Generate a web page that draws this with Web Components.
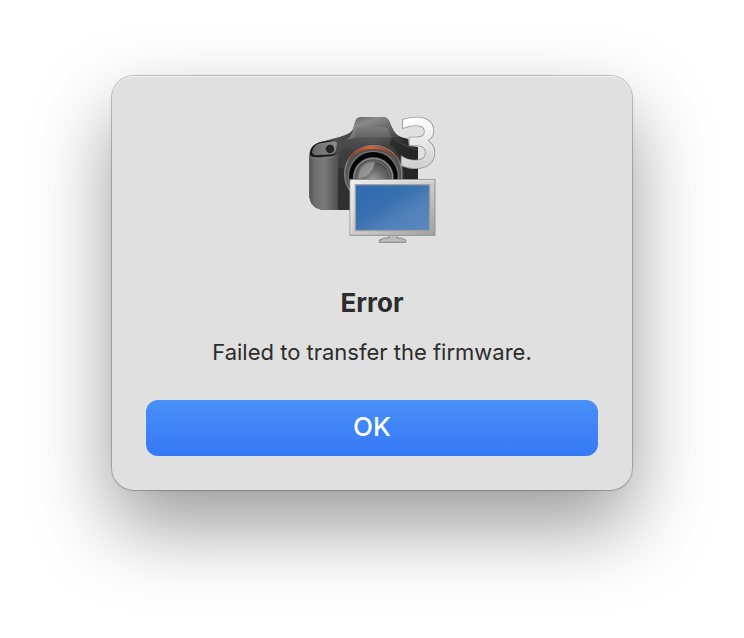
<!DOCTYPE html>
<html lang="en">
<head>
<meta charset="utf-8">
<title>Error</title>
<style>
	body {
		margin: 0;
		background: #fff;
		color: #2c2c2c;
		font-family: Inter, "Liberation Sans", sans-serif;
	}
</style>
</head>
<body>
<alert-dialog>
	<camera-icon slot="icon"></camera-icon>
	<span slot="title">Error</span>
	<span slot="message">Failed to transfer the firmware.</span>
	<alert-button slot="actions">OK</alert-button>
</alert-dialog>

<script>
const iconTemplate = document.createElement('template');
iconTemplate.innerHTML = `
	<style>
		:host {
			display: block;
			width: 128px;
			height: 128px;
		}

		svg {
			display: block;
			width: 100%;
			height: 100%;
			overflow: visible;
		}
	</style>
	<svg viewBox="24 33 384 384" role="img" aria-label="Camera and display">
		<defs>
			<linearGradient id="body" x1="0" y1="0" x2="1" y2="0">
				<stop offset="0" stop-color="#505050"/>
				<stop offset=".35" stop-color="#4a4a4a"/>
				<stop offset=".6" stop-color="#555"/>
				<stop offset="1" stop-color="#1e1e1e"/>
			</linearGradient>
			<linearGradient id="shade" x1="0" y1="0" x2="0" y2="1">
				<stop offset="0" stop-color="#777" stop-opacity=".6"/>
				<stop offset=".3" stop-color="#333" stop-opacity=".5"/>
				<stop offset="1" stop-color="#222" stop-opacity=".5"/>
			</linearGradient>
			<linearGradient id="grip" x1="0" y1="0" x2="1" y2="0">
				<stop offset="0" stop-color="#505050"/>
				<stop offset=".15" stop-color="#6d6d6d"/>
				<stop offset=".5" stop-color="#7a7a7a"/>
				<stop offset="1" stop-color="#4c4c4c"/>
			</linearGradient>
			<linearGradient id="plate" x1="0" y1="0" x2="1" y2="0">
				<stop offset="0" stop-color="#686868"/>
				<stop offset="1" stop-color="#8c8c8c"/>
			</linearGradient>
			<linearGradient id="prism" x1="0" y1="0" x2="1" y2="1">
				<stop offset="0" stop-color="#5c5c5c"/>
				<stop offset=".3" stop-color="#8a8a8a"/>
				<stop offset="1" stop-color="#3c3c3c"/>
			</linearGradient>
			<linearGradient id="flash" x1="0" y1="0" x2="0" y2="1">
				<stop offset="0" stop-color="#7c7c7c"/>
				<stop offset="1" stop-color="#646464"/>
			</linearGradient>
			<linearGradient id="ring" x1="0" y1="0" x2="1" y2="0">
				<stop offset="0" stop-color="#713024"/>
				<stop offset=".45" stop-color="#f0602f"/>
				<stop offset="1" stop-color="#682d22"/>
			</linearGradient>
			<radialGradient id="glass" cx=".5" cy=".6" r=".6">
				<stop offset="0" stop-color="#a0a0a0"/>
				<stop offset=".55" stop-color="#6c6c6c"/>
				<stop offset="1" stop-color="#484848"/>
			</radialGradient>
			<linearGradient id="digit" gradientUnits="userSpaceOnUse" x1="0" y1="40" x2="0" y2="188">
				<stop offset="0" stop-color="#fff"/>
				<stop offset="1" stop-color="#cfcfcf"/>
			</linearGradient>
			<linearGradient id="frame" x1="0" y1="0" x2="1" y2="1">
				<stop offset="0" stop-color="#efefef"/>
				<stop offset=".5" stop-color="#cecece"/>
				<stop offset="1" stop-color="#a0a0a0"/>
			</linearGradient>
			<linearGradient id="screen" x1="0" y1="0" x2="1" y2="1">
				<stop offset="0" stop-color="#2f6bae"/>
				<stop offset=".4" stop-color="#386fb0"/>
				<stop offset=".65" stop-color="#5080b8"/>
				<stop offset="1" stop-color="#5b8abf"/>
			</linearGradient>
		</defs>

		<!-- camera body -->
		<path fill="url(#body)" d="M28 152C28 128 40 118 62 111L118 96C145 88 157 82 161 66L166 50C169 39 176 36 190 36H246C260 36 266 42 270 54C279 77 288 92 303 96L325 102L327 123L354 126V315H76C43 315 28 295 28 270Z"/>
		<path fill="url(#shade)" d="M112 145C137 131 158 110 165 76L170 65H264L276 96L300 120L354 126V315H112Z"/>
		<path fill="url(#prism)" d="M161 66L166 50C169 39 176 36 190 36H246C260 36 266 42 270 54C279 77 288 92 303 96L274 96L266 76Q264 66 252 66H182Q170 67 168 78L164 98L140 105C154 94 158 82 161 66Z"/>
		<path fill="url(#flash)" d="M164 97L168 78Q171 67 182 66H252Q264 67 267 78L272 97Z"/>
		<path fill="#222" opacity=".65" d="M276 97C292 108 304 121 325 125L354 127V315H314V220C310 160 290 130 268 120Z"/>
		<path fill="none" stroke="#555" stroke-width="2" d="M273 96C288 103 302 120 325 124L352 136"/>
		<!-- hand grip -->
		<path fill="url(#grip)" d="M28 150Q34 159 58 158L102 154L118 146Q114 158 114 176V315H76C43 315 28 295 28 270Z"/>
		<path fill="#303030" d="M115 190H151V315H120Q113 309 113 296Z"/>
		<path fill="#151515" d="M30 148C31 124 46 114 66 110L104 106L66 115C46 119 38 128 37 143Q40 149 51 151L94 148Q104 147 107 137Q106 150 94 152L52 156Q33 157 30 148Z"/>
		<path fill="url(#plate)" d="M37 143C38 126 48 119 66 115L105 110Q112 109 111 117L107 137Q104 147 92 148L51 151Q38 150 37 143Z"/>
		<path fill="none" stroke="#999" stroke-width="1.5" d="M45 123Q54 117 67 115L106 110"/>
		<circle cx="90" cy="132" r="13" fill="#252525"/>
		<path fill="none" stroke="#858585" stroke-width="2" d="M30 156Q34 161 57 160L103 156"/>
		<!-- lens -->
		<circle cx="220" cy="207" r="89" fill="#303030"/>
		<circle cx="220" cy="207" r="86" fill="#555" stroke="#858585" stroke-width="4"/>
		<path fill="url(#ring)" d="M142 174Q160 125 218 124Q279 126 299 175Q273 132 218 131Q166 133 142 174Z"/>
		<circle cx="220" cy="214" r="77" fill="#747474"/>
		<circle cx="220" cy="214" r="73" fill="#050505"/>
		<circle cx="220" cy="218" r="62" fill="#2e2e2e"/>
		<circle cx="220" cy="218" r="58" fill="#505050" stroke="#858585" stroke-width="5"/>
		<circle cx="220" cy="218" r="50" fill="url(#glass)" stroke="#858585" stroke-width="2"/>
		<path fill="#b0b0b0" opacity=".6" d="M174 222C174 187 194 169 225 171Q222 193 203 209Q193 218 174 222Z"/>

		<!-- the version digit, over its own grey edge -->
		<use href="#version" fill="#929292" stroke="#929292" stroke-width="12"/>
		<g fill="url(#digit)" stroke="url(#digit)" stroke-width="7">
			<text id="version" x="294" y="182" font-family="DejaVu Sans, sans-serif" font-size="190">3</text>
		</g>

		<!-- display -->
		<rect x="150" y="224" width="255" height="167" fill="url(#frame)" stroke="#939393" stroke-width="3"/>
		<path fill="none" stroke="#f5f5f5" stroke-width="2" d="M153 387V227H401"/>
		<rect x="166" y="239" width="223" height="138" fill="url(#screen)" stroke="#a1a1a1" stroke-width="4"/>
		<path fill="#a9a9a9" d="M266 393H291V400H266Z"/>
		<path fill="#bcbcbc" stroke="#858585" stroke-width="3" d="M266 393V399H252Q246 403 238 405V412H317V405Q309 402 304 399H291V393"/>
	</svg>
`;

class CameraIcon extends HTMLElement {
	constructor() {
		super();
		this.attachShadow({ mode: 'open' });
		this.shadowRoot.appendChild(iconTemplate.content.cloneNode(true));
	}
}

const buttonTemplate = document.createElement('template');
buttonTemplate.innerHTML = `
	<style>
		:host {
			display: block;
		}

		button {
			display: block;
			width: 100%;
			height: 56px;
			padding: 0 16px 2px;
			border: 0;
			border-radius: 12px;
			background: linear-gradient(#4990f8, #3478f6);
			color: #fff;
			font: 500 26px/32px Inter, "Liberation Sans", sans-serif;
		}

		button:active {
			background: #2869df;
		}
	</style>
	<button type="button"><slot></slot></button>
`;

class AlertButton extends HTMLElement {
	constructor() {
		super();
		this.attachShadow({ mode: 'open' });
		this.shadowRoot.appendChild(buttonTemplate.content.cloneNode(true));
	}
}

const dialogTemplate = document.createElement('template');
dialogTemplate.innerHTML = `
	<style>
		:host {
			display: flex;
			justify-content: center;
			align-items: flex-start;
			box-sizing: border-box;
			min-height: 100vh;
			padding: 76px 24px;
			overflow: hidden;
		}

		.panel {
			box-sizing: border-box;
			width: 100%;
			max-width: 520px;
			padding: 40px 34px 34px;
			border-radius: 22px;
			background: #e0e0e0;
			box-shadow:
				inset 0 1px 0 #f3f3f3,
				0 0 0 1px rgba(0, 0, 0, .2),
				0 0 3px rgba(0, 0, 0, .1),
				0 36px 80px rgba(0, 0, 0, .4);
			text-align: center;
		}

		.icon {
			display: flex;
			justify-content: center;
		}

		h1 {
			margin: 43px 0 0;
			font-size: 26px;
			line-height: 32px;
			font-weight: 700;
		}

		p {
			margin: 19px 0 0;
			font-size: 22px;
			line-height: 28px;
		}

		.actions {
			margin-top: 34px;
		}
	</style>
	<div class="panel" role="alertdialog" aria-labelledby="title" aria-describedby="message">
		<div class="icon"><slot name="icon"></slot></div>
		<h1 id="title"><slot name="title"></slot></h1>
		<p id="message"><slot name="message"></slot></p>
		<div class="actions"><slot name="actions"></slot></div>
	</div>
`;

class AlertDialog extends HTMLElement {
	constructor() {
		super();
		this.attachShadow({ mode: 'open' });
		this.shadowRoot.appendChild(dialogTemplate.content.cloneNode(true));
	}
}

customElements.define('camera-icon', CameraIcon);
customElements.define('alert-button', AlertButton);
customElements.define('alert-dialog', AlertDialog);
</script>
</body>
</html>
